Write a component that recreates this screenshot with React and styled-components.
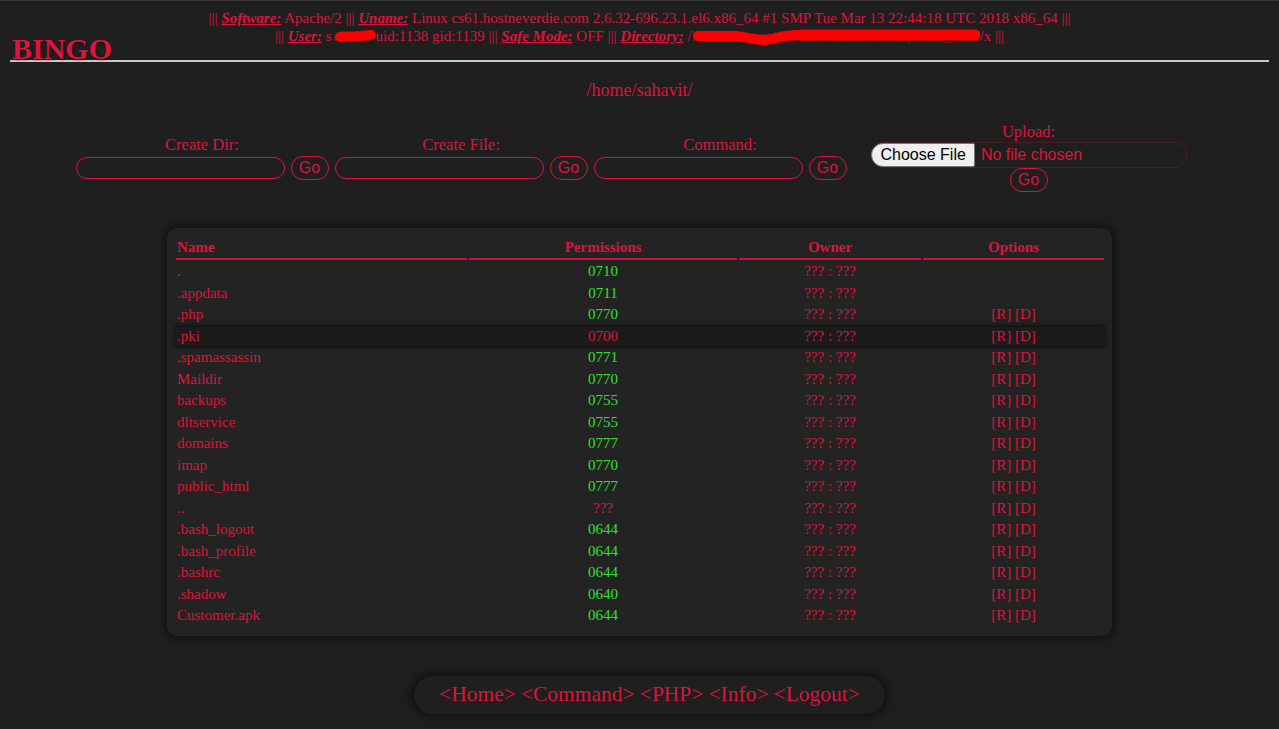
import React from "react";
import styled, { createGlobalStyle } from "styled-components";

const CRIMSON = "#dc143c";
const GREEN = "#2fe02f";

const Global = createGlobalStyle`
  html, body {
    margin: 0;
    padding: 0;
    background: #1f1f1f;
  }
  body {
    font-family: "Liberation Serif", "Times New Roman", serif;
    color: ${CRIMSON};
    border-top: 1px solid #3a3a3a;
  }
  * { box-sizing: border-box; }
`;

const Page = styled.div`
  min-height: 728px;
  padding-bottom: 16px;
`;

const Header = styled.header`
  display: grid;
  margin: 0 10px;
  height: 61px;
  padding-top: 8px;
  border-bottom: 2px solid #c9c9c9;
`;

const Title = styled.h1`
  grid-area: 1 / 1;
  align-self: end;
  justify-self: start;
  margin: 0 0 -4px 2px;
  font-size: 30px;
  line-height: 30px;
  font-weight: bold;
  color: ${CRIMSON};
  text-shadow: 1px 1px 2px rgba(0, 0, 0, 0.6);
`;

const Info = styled.div`
  grid-area: 1 / 1;
  align-self: start;
  text-align: center;
  font-size: 15px;
  line-height: 18px;
`;

const Key = styled.b`
  font-style: italic;
  text-decoration: underline;
`;

const Redacted = styled.span`
  position: relative;
  display: inline-block;
  width: ${(p) => p.$w}px;
  height: 18px;
  white-space: nowrap;
  overflow: hidden;
  vertical-align: bottom;
  color: #8a1028;
`;

const Scribble = styled.svg`
  position: absolute;
  left: 0;
  top: 0;
  width: 100%;
  height: 100%;
`;

const PathLine = styled.div`
  margin-top: 18px;
  text-align: center;
  font-size: 18px;
  line-height: 20px;
`;

const FormRow = styled.div`
  margin-top: 22px;
  display: flex;
  justify-content: center;
  align-items: center;
  gap: 6px;
  padding-right: 17px;
`;

const Group = styled.div`
  display: flex;
  flex-direction: column;
  align-items: center;
  margin-left: ${(p) => p.$ml || 0}px;
`;

const Label = styled.div`
  font-size: 16.5px;
  line-height: 19px;
  margin-bottom: ${(p) => p.$mb ?? 2}px;
`;

const Inline = styled.div`
  display: flex;
  align-items: center;
  gap: 6px;
`;

const TextInput = styled.input`
  width: 209px;
  height: 22px;
  border: 1px solid ${CRIMSON};
  border-radius: 12px;
  background: transparent;
  color: ${CRIMSON};
  outline: none;
  padding: 0 8px;
`;

const GoButton = styled.button`
  width: 38px;
  height: 24px;
  padding: 0;
  border: 1px solid ${CRIMSON};
  border-radius: 12px;
  background: transparent;
  color: ${CRIMSON};
  font-family: "Liberation Sans", Arial, sans-serif;
  font-size: 16px;
  line-height: 20px;
`;

const FileBox = styled.label`
  display: flex;
  align-items: center;
  width: 316px;
  height: 26px;
  border: 1px solid #4d1a25;
  border-radius: 13px;
  font-family: "Liberation Sans", Arial, sans-serif;
  font-size: 16px;
`;

const FileButton = styled.span`
  display: flex;
  align-items: center;
  height: 24px;
  padding: 0 8px 0 9px;
  background: #efefef;
  color: #000;
  border: 1px solid #767676;
  border-radius: 12px 2px 2px 12px;
  margin-left: -1px;
`;

const FileText = styled.span`
  color: ${CRIMSON};
  margin-left: 6px;
`;

const Card = styled.div`
  width: 945px;
  margin: 36px auto 0;
  padding: 6px 7px 8px;
  background: #232323;
  border-radius: 10px;
  box-shadow: 0 0 10px 2px rgba(0, 0, 0, 0.55);
`;

const Table = styled.table`
  width: 932px;
  border-spacing: 2px;
  table-layout: fixed;
  font-size: 15px;
`;

const Th = styled.th`
  text-align: ${(p) => p.$align || "center"};
  font-weight: bold;
  padding: 3px 1px 2px;
  line-height: 17px;
  border-bottom: 2px solid #c8143c;
  color: ${CRIMSON};
`;

const Row = styled.tr`
  box-shadow: ${(p) => (p.$hl ? "0 0 4px 1px rgba(0,0,0,0.7)" : "none")};
`;

const Td = styled.td`
  padding: 1px;
  line-height: 17.5px;
  text-align: ${(p) => p.$align || "center"};
  color: ${(p) => p.$color || CRIMSON};
  white-space: nowrap;
  background: ${(p) => (p.$hl ? "#1b1b1b" : "transparent")};
  box-shadow: ${(p) =>
    p.$hl ? "1px 0 0 #1b1b1b, -1px 0 0 #1b1b1b" : "none"};
`;

const NavWrap = styled.div`
  margin-top: 40px;
  display: flex;
  justify-content: center;
  padding-left: 20px;
`;

const Nav = styled.nav`
  display: flex;
  gap: 5px;
  height: 38px;
  align-items: center;
  padding: 0 25px;
  background: #1f1f1f;
  border-radius: 19px;
  box-shadow: 0 0 10px 3px rgba(0, 0, 0, 0.5);
  font-size: 21.5px;
`;

const NavLink = styled.a`
  color: ${CRIMSON};
  text-decoration: none;
`;

const rows = [
  [".", "0710", true, false],
  [".appdata", "0711", true, false],
  [".php", "0770", true, true],
  [".pki", "0700", false, true, true],
  [".spamassassin", "0771", true, true],
  ["Maildir", "0770", true, true],
  ["backups", "0755", true, true],
  ["dltservice", "0755", true, true],
  ["domains", "0777", true, true],
  ["imap", "0770", true, true],
  ["public_html", "0777", true, true],
  ["..", "???", false, true],
  [".bash_logout", "0644", true, true],
  [".bash_profile", "0644", true, true],
  [".bashrc", "0644", true, true],
  [".shadow", "0640", true, true],
  ["Customer.apk", "0644", true, true],
];

export default function App() {
  return (
    <Page>
      <Global />
      <Header>
        <Info>
          ||| <Key>Software:</Key> Apache/2 ||| <Key>Uname:</Key> Linux
          cs61.hostneverdie.com 2.6.32-696.23.1.el6.x86_64 #1 SMP Tue Mar 13
          22:44:18 UTC 2018 x86_64 |||
          <br />
          ||| <Key>User:</Key> s
          <Redacted $w={44}>
            ahavit&nbsp;
            <Scribble viewBox="0 0 44 18">
              <path
                d="M8 10 C 14 9, 22 10, 30 9 S 37 8, 39 8"
                stroke="#ff0000"
                strokeWidth="10"
                strokeLinecap="round"
                fill="none"
              />
            </Scribble>
          </Redacted>
          uid:1138 gid:1139 ||| <Key>Safe Mode:</Key> OFF |||{" "}
          <Key>Directory:</Key> /
          <Redacted $w={288}>
            home/sahavit/domains/sahavit.com/public_html
            <Scribble viewBox="0 0 288 18">
              <path
                d="M6 9 L 44 9 C 54 10, 62 13, 72 13 C 82 13, 90 7, 110 8 L 284 8"
                stroke="#ff0000"
                strokeWidth="10"
                strokeLinecap="round"
                fill="none"
              />
              <path
                d="M108 8 L 285 8"
                stroke="#ff0000"
                strokeWidth="11"
                strokeLinecap="butt"
                fill="none"
              />
            </Scribble>
          </Redacted>
          /x |||
        </Info>
        <Title>BINGO</Title>
      </Header>

      <PathLine>/home/sahavit/</PathLine>

      <FormRow>
        <Group>
          <Label>Create Dir:</Label>
          <Inline>
            <TextInput type="text" />
            <GoButton>Go</GoButton>
          </Inline>
        </Group>
        <Group>
          <Label>Create File:</Label>
          <Inline>
            <TextInput type="text" />
            <GoButton>Go</GoButton>
          </Inline>
        </Group>
        <Group>
          <Label>Command:</Label>
          <Inline>
            <TextInput type="text" />
            <GoButton>Go</GoButton>
          </Inline>
        </Group>
        <Group $ml={18}>
          <Label $mb={1}>Upload:</Label>
          <FileBox>
            <FileButton>Choose File</FileButton>
            <FileText>No file chosen</FileText>
          </FileBox>
          <GoButton>Go</GoButton>
        </Group>
      </FormRow>

      <Card>
        <Table>
          <colgroup>
            <col style={{ width: 291 }} />
            <col style={{ width: 268 }} />
            <col style={{ width: 182 }} />
            <col style={{ width: 181 }} />
          </colgroup>
          <thead>
            <tr>
              <Th $align="left">Name</Th>
              <Th>Permissions</Th>
              <Th>Owner</Th>
              <Th>Options</Th>
            </tr>
          </thead>
          <tbody>
            {rows.map(([name, perm, ok, opts, hl]) => (
              <Row key={name} $hl={hl}>
                <Td $hl={hl} $align="left">{name}</Td>
                <Td $hl={hl} $color={ok ? GREEN : CRIMSON}>{perm}</Td>
                <Td $hl={hl}>??? : ???</Td>
                <Td $hl={hl}>{opts ? "[R] [D]" : ""}</Td>
              </Row>
            ))}
          </tbody>
        </Table>
      </Card>

      <NavWrap>
        <Nav>
          <NavLink href="#">&lt;Home&gt;</NavLink>
          <NavLink href="#">&lt;Command&gt;</NavLink>
          <NavLink href="#">&lt;PHP&gt;</NavLink>
          <NavLink href="#">&lt;Info&gt;</NavLink>
          <NavLink href="#">&lt;Logout&gt;</NavLink>
        </Nav>
      </NavWrap>
    </Page>
  );
}
